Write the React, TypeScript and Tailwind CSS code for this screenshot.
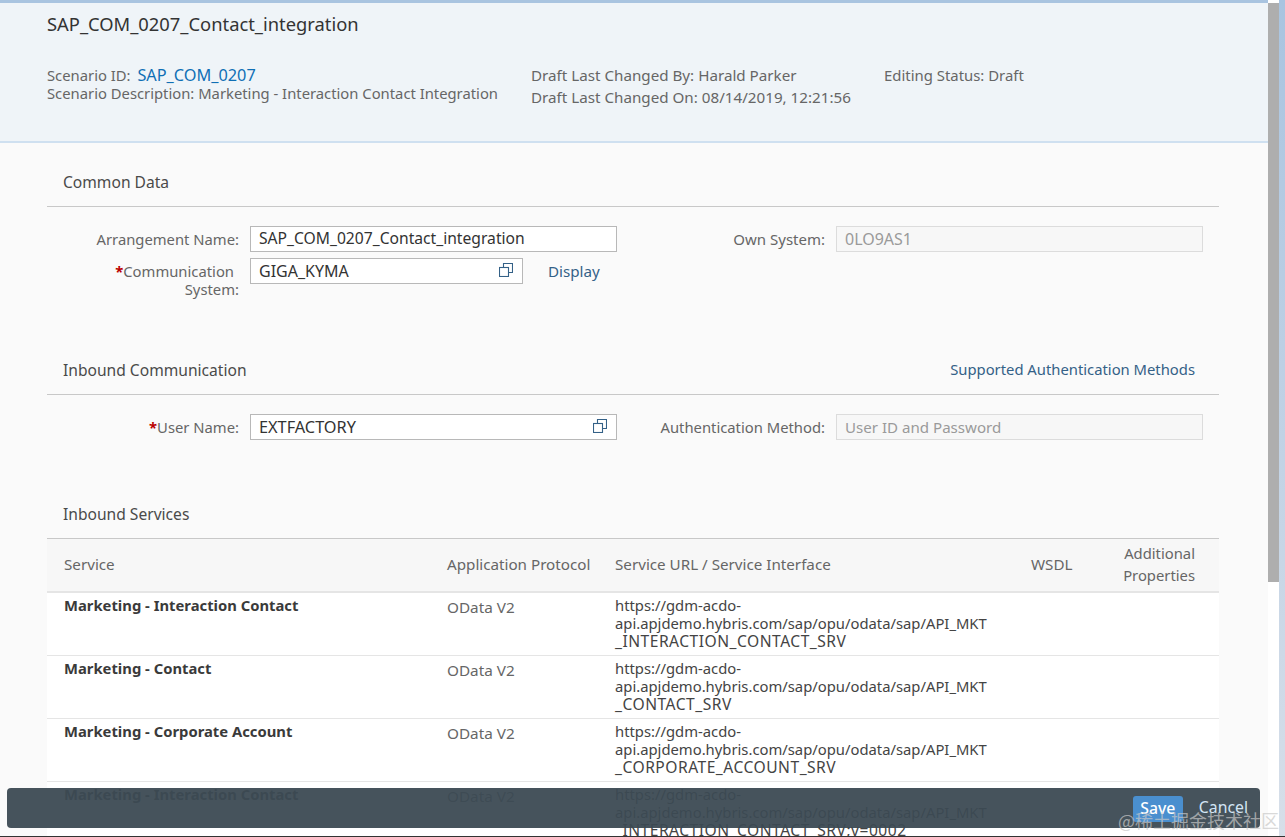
import { ReactNode } from "react";

const SERVICES = [
  { name: "Marketing - Interaction Contact", suffix: "_INTERACTION_CONTACT_SRV" },
  { name: "Marketing - Contact", suffix: "_CONTACT_SRV" },
  { name: "Marketing - Corporate Account", suffix: "_CORPORATE_ACCOUNT_SRV" },
  { name: "Marketing - Interaction Contact", suffix: "_INTERACTION_CONTACT_SRV;v=0002" },
];

function CopyIcon() {
  return (
    <svg className="-mt-[2px]" width="14" height="14" viewBox="0 0 14 14" fill="none" stroke="#346187" strokeWidth="1.1">
      <path d="M4.5 4.5V0.5H13.5V9.5H9.5" />
      <rect x="0.5" y="4.5" width="9" height="9" />
    </svg>
  );
}

function SectionTitle({ children, action }: { children: ReactNode; action?: ReactNode }) {
  return (
    <div className="flex h-[64px] items-center justify-between border-b border-[#c8c8c8] pt-[16px] pr-6 pl-4 text-[15.6px] text-[#4a4a4a]">
      <span>{children}</span>
      {action}
    </div>
  );
}

function Field({ value, icon, disabled, className }: { value: string; icon?: boolean; disabled?: boolean; className: string }) {
  return (
    <div
      className={`flex h-[26px] shrink-0 items-center justify-between border pr-[9px] pl-2 ${className} ${
        disabled ? "border-[#dcdcdc] bg-[#f7f7f7] text-[#9a9a9a]" : "border-[#b8b8b8] bg-white text-[#333333]"
      }`}
    >
      <span>{value}</span>
      {icon && <CopyIcon />}
    </div>
  );
}

export default function App() {
  return (
    <div className="relative flex h-[837px] w-[1285px] overflow-hidden bg-[#fafafa] font-['Noto_Sans',sans-serif] text-[14.8px]">
      <div className="flex w-[1268px] shrink-0 flex-col">
        <div className="h-[3px] shrink-0 bg-[#a9c4e0]" />

        {/* Header */}
        <header className="h-[140px] shrink-0 border-b-2 border-[#cfe0f0] bg-[#eff4f8] pl-[47px] text-[#666666]">
          <h1 className="pt-[9px] text-[18.35px] leading-6 text-[#333333]">SAP_COM_0207_Contact_integration</h1>
          <div className="mt-[30px] flex leading-[18px]">
            <div className="w-[484px]">
              <div>
                Scenario ID: <span className="ml-[3px] text-[16.3px] text-[#0f6fb5]">SAP_COM_0207</span>
              </div>
              <div>Scenario Description: Marketing - Interaction Contact Integration</div>
            </div>
            <div className="w-[353px] space-y-1 text-[15.2px]">
              <div>Draft Last Changed By: Harald Parker</div>
              <div>Draft Last Changed On: 08/14/2019, 12:21:56</div>
            </div>
            <div className="text-[14.9px]">Editing Status: Draft</div>
          </div>
        </header>

        <main className="mr-[49px] ml-[47px] flex-1 overflow-hidden">
          {/* Common Data */}
          <SectionTitle>Common Data</SectionTitle>
          <div className="flex h-[124px] pt-[19px] text-[#666666]">
            <div className="w-[203px] shrink-0 pr-[11px] text-right">
              <div className="h-[32px] leading-[26px]">Arrangement Name:</div>
              <div className="pt-[4px] leading-[18px]">
                <span className="pr-[5px]">
                  <span className="font-bold text-[#bb0000]">*</span>Communication
                </span>
                <br />
                System:
              </div>
            </div>
            <div className="w-[481px] shrink-0">
              <Field value="SAP_COM_0207_Contact_integration" className="w-[367px] text-[15.65px]" />
              <div className="mt-[6px] flex items-center gap-[25px]">
                <Field value="GIGA_KYMA" icon className="w-[273px] text-[16px]" />
                <span className="text-[15.2px] text-[#346187]">Display</span>
              </div>
            </div>
            <div className="w-[94px] shrink-0 text-right text-[15px] leading-[26px] whitespace-nowrap">Own System:</div>
            <Field value="0LO9AS1" disabled className="ml-[11px] w-[367px] text-[16px]" />
          </div>

          {/* Inbound Communication */}
          <SectionTitle action={<span className="pb-[3px] text-[14.8px] text-[#346187]">Supported Authentication Methods</span>}>
            Inbound Communication
          </SectionTitle>
          <div className="flex h-[80px] pt-[19px] text-[#666666]">
            <div className="w-[203px] shrink-0 pr-[11px] text-right leading-[26px]">
              <span className="font-bold text-[#bb0000]">*</span>User Name:
            </div>
            <Field value="EXTFACTORY" icon className="w-[367px] text-[16.3px]" />
            <div className="w-[208px] shrink-0 text-right leading-[26px] whitespace-nowrap">Authentication Method:</div>
            <Field value="User ID and Password" disabled className="ml-[11px] w-[367px] text-[15.1px]" />
          </div>

          {/* Inbound Services */}
          <SectionTitle>Inbound Services</SectionTitle>
          <table className="w-full table-fixed border-collapse text-left text-[#666666]">
            <thead className="bg-[#f7f7f7] text-[15.2px]">
              <tr className="h-[53px] border-b-2 border-[#e5e5e5]">
                <th className="w-[400px] pb-[2px] pl-[17px] font-normal">Service</th>
                <th className="w-[168px] pb-[2px] font-normal">Application Protocol</th>
                <th className="w-[416px] pb-[2px] font-normal">Service URL / Service Interface</th>
                <th className="w-[88px] pb-[2px] font-normal">WSDL</th>
                <th className="pr-[24px] pb-[2px] text-right text-[14.8px] leading-[22px] font-normal">
                  Additional
                  <br />
                  Properties
                </th>
              </tr>
            </thead>
            <tbody className="bg-white">
              {SERVICES.map((service, i) => (
                <tr key={i} className="h-[63px] border-b border-[#e5e5e5] align-top">
                  <td className="pt-[3px] pl-[17px] leading-[18px] font-bold text-[#3a3a3a]">{service.name}</td>
                  <td className="pt-[5px] text-[15.3px] leading-[18px]">OData V2</td>
                  <td className="pt-[3px] leading-[18px] text-[#444444]">
                    https://gdm-acdo-
                    <br />
                    api.apjdemo.hybris.com/sap/opu/odata/sap/API_MKT
                    <br />
                    <span className="text-[15.6px] tracking-[0.5px]">{service.suffix}</span>
                  </td>
                  <td />
                  <td />
                </tr>
              ))}
            </tbody>
          </table>
        </main>
      </div>

      {/* Scrollbar */}
      <div className="flex w-[11px] shrink-0 flex-col bg-white pt-[3px]">
        <div className="h-[579px] bg-[#aeaeae]" />
      </div>
      <div className="flex-1 bg-gradient-to-b from-[#a9c4e0] to-[#d7dfe9]" />

      {/* Footer toolbar */}
      <div className="absolute top-[788px] left-[7px] flex h-[40px] w-[1253px] items-center justify-end gap-4 rounded-[4px] bg-[#3c4a53]/95 pr-3 text-[15.8px]">
        <button className="mt-[1px] h-[26px] w-[50px] rounded-[3px] bg-[#4a8fcf] font-medium text-white">Save</button>
        <button className="text-[#d3e5f5]">Cancel</button>
      </div>

      <div className="absolute top-[807px] right-[6px] font-['Noto_Sans_CJK_SC',sans-serif] text-[18px] text-[#c8c8c8]/70">
        @稀土掘金技术社区
      </div>
      <div className="absolute right-0 bottom-0 left-0 h-[1px] bg-[#333333]" />
    </div>
  );
}
